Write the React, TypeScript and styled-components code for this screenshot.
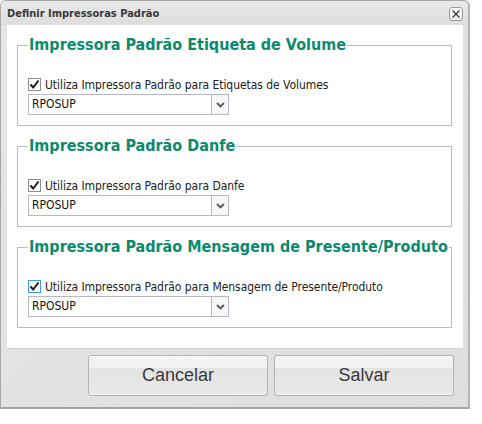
import styled, {createGlobalStyle} from 'styled-components';

const GlobalStyle = createGlobalStyle`
  html, body {
    margin: 0;
    padding: 0;
    background: #ffffff;
  }
`;

const sections = [
  {
    title: 'Impressora Padrão Etiqueta de Volume',
    label: 'Utiliza Impressora Padrão para Etiquetas de Volumes',
    focused: false,
  },
  {
    title: 'Impressora Padrão Danfe',
    label: 'Utiliza Impressora Padrão para Danfe',
    focused: false,
  },
  {
    title: 'Impressora Padrão Mensagem de Presente/Produto',
    label: 'Utiliza Impressora Padrão para Mensagem de Presente/Produto',
    focused: true,
  },
];

const Window = styled.div`
  box-sizing: border-box;
  display: flex;
  flex-direction: column;
  width: 470px;
  height: 409px;
  background: linear-gradient(135deg, #e6e6e6 0%, #dedede 100%);
  border: 1px solid #a9a9a9;
  border-bottom: 2px solid #a3a3a3;
  border-right: 2px solid #b3b3b3;
  border-radius: 6px 6px 0 0;
  font-family: 'DejaVu Sans Condensed', 'DejaVu Sans', sans-serif;
`;

const TitleBar = styled.div`
  display: flex;
  align-items: center;
  justify-content: space-between;
  height: 24px;
  padding: 0 5px 0 6px;
  background: linear-gradient(#e9e9e9, #dddddd);
  border-radius: 5px 5px 0 0;
`;

const Title = styled.span`
  color: #3a3a3a;
  font-size: 11px;
  font-weight: bold;
`;

const CloseButton = styled.div`
  box-sizing: border-box;
  display: flex;
  align-items: center;
  justify-content: center;
  width: 14px;
  height: 14px;
  margin-top: 2px;
  background: linear-gradient(#fdfdfd, #ececec);
  border: 1px solid #9a9a9a;
  border-radius: 3px;
`;

const Content = styled.div`
  display: flex;
  flex-direction: column;
  gap: 10px;
  height: 324px;
  margin: 0 5px 0 6px;
  padding: 10px 11px 0 10px;
  box-sizing: border-box;
  background: #ffffff;
  border-bottom: 1px solid #d0d0d0;
`;

const Group = styled.fieldset`
  box-sizing: border-box;
  min-width: 0;
  height: 91px;
  margin: 0;
  padding: 0 4px 0 10px;
  border: 1px solid #b9b9cf;
`;

const Legend = styled.legend`
  padding: 0 1px;
  color: #0b8a6e;
  font-family: 'DejaVu Sans Condensed', 'DejaVu Sans', sans-serif;
  font-size: 16px;
  font-weight: bold;
  line-height: 20px;
  white-space: nowrap;
`;

const CheckRow = styled.label`
  display: flex;
  align-items: center;
  gap: 4px;
  margin-top: 22px;
  height: 15px;
  color: #222222;
  font-size: 12px;
  letter-spacing: -0.05px;
`;

const CheckBox = styled.span<{$focused: boolean}>`
  box-sizing: border-box;
  display: flex;
  align-items: center;
  justify-content: center;
  width: 13px;
  height: 13px;
  background: #ffffff;
  border: 1px solid ${({$focused}) => ($focused ? '#3d9be6' : '#8e8f8f')};
`;

const Select = styled.div`
  box-sizing: border-box;
  display: flex;
  width: 201px;
  height: 21px;
  margin-top: 2px;
  border: 1px solid #b7b7c6;
  background: #ffffff;
`;

const SelectValue = styled.span`
  flex: 1;
  padding-left: 3px;
  color: #111111;
  font-size: 12px;
  line-height: 19px;
`;

const SelectArrow = styled.span`
  display: flex;
  align-items: center;
  justify-content: center;
  width: 16px;
  border-left: 1px solid #b7b7c6;
  background: #f7f7f7;
`;

const Footer = styled.div`
  display: flex;
  justify-content: flex-end;
  gap: 6px;
  padding: 6px 14px 0 0;
`;

const Button = styled.div`
  box-sizing: border-box;
  display: flex;
  align-items: center;
  justify-content: center;
  width: 180px;
  height: 41px;
  color: #3a3a3a;
  font-family: 'Liberation Sans', Arial, sans-serif;
  font-size: 18px;
  background: linear-gradient(#f4f4f4 0%, #f1f1f1 30%, #e4e4e4 32%, #e8e8e8 100%);
  border: 1px solid #b4b4b4;
  border-radius: 3px;
  box-shadow: inset 0 1px 0 #fafafa, inset 0 -1px 0 #f2f2f2;
`;

const Chevron = () => (
  <svg width="9" height="6" viewBox="0 0 9 6">
    <path d="M1 1 L4.5 4.5 L8 1" fill="none" stroke="#555a60" strokeWidth="1.8" />
  </svg>
);

const Check = () => (
  <svg width="11" height="11" viewBox="0 0 11 11">
    <path d="M1.5 5.5 L4.2 8.5 L9.5 1.5" fill="none" stroke="#1a1a1a" strokeWidth="2" />
  </svg>
);

const CloseIcon = () => (
  <svg width="10" height="10" viewBox="0 0 10 10">
    <path d="M1.5 1.5 L8.5 8.5 M8.5 1.5 L1.5 8.5" stroke="#333" strokeWidth="1.2" />
  </svg>
);

export default function App() {
  return (
    <>
      <GlobalStyle />
      <Window>
        <TitleBar>
          <Title>Definir Impressoras Padrão</Title>
          <CloseButton>
            <CloseIcon />
          </CloseButton>
        </TitleBar>
        <Content>
          {sections.map((section) => (
            <Group key={section.title}>
              <Legend>{section.title}</Legend>
              <CheckRow>
                <CheckBox $focused={section.focused}>
                  <Check />
                </CheckBox>
                {section.label}
              </CheckRow>
              <Select>
                <SelectValue>RPOSUP</SelectValue>
                <SelectArrow>
                  <Chevron />
                </SelectArrow>
              </Select>
            </Group>
          ))}
        </Content>
        <Footer>
          <Button>Cancelar</Button>
          <Button>Salvar</Button>
        </Footer>
      </Window>
    </>
  );
}
